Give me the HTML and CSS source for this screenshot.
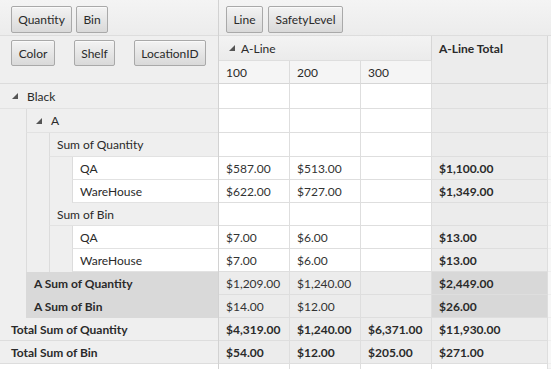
FILE: index.html
```html
<!DOCTYPE html>
<html>
<head>
<meta charset="utf-8">
<link rel="stylesheet" href="styles.css">
</head>
<body>
<div class="pivot">
  <div class="top">
    <div class="lefttop">
      <div class="band">
        <span class="btn w-qty">Quantity</span>
        <span class="btn w-bin">Bin</span>
      </div>
      <div class="rowfields">
        <span class="btn w-color">Color</span>
        <span class="btn w-shelf">Shelf</span>
        <span class="btn w-loc">LocationID</span>
      </div>
    </div>
    <div class="righttop">
      <div class="band band-r">
        <span class="btn w-line">Line</span>
        <span class="btn w-safety">SafetyLevel</span>
      </div>
      <div class="colhead">
        <div class="ch-group"><svg class="tri" viewBox="0 0 6 6"><polygon points="6,0 6,6 0,6"/></svg>A-Line</div>
        <div class="ch-total">A-Line Total</div>
        <div class="ch-col">100</div>
        <div class="ch-col">200</div>
        <div class="ch-col">300</div>
      </div>
    </div>
  </div>

  <div class="body">
    <div class="row h25">
      <div class="rh"><div class="lbl lvl0 gray first"><svg class="tri" viewBox="0 0 6 6"><polygon points="6,0 6,6 0,6"/></svg>Black</div></div>
      <div class="c"></div><div class="c"></div><div class="c"></div><div class="c t"></div><div class="edge"></div>
    </div>
    <div class="row h24">
      <div class="rh"><div class="sp s0"></div><div class="lbl gray l1"><svg class="tri" viewBox="0 0 6 6"><polygon points="6,0 6,6 0,6"/></svg>A</div></div>
      <div class="c"></div><div class="c"></div><div class="c"></div><div class="c t"></div><div class="edge"></div>
    </div>
    <div class="row h24">
      <div class="rh"><div class="sp s0"></div><div class="sp s1"></div><div class="lbl gray l2">Sum of Quantity</div></div>
      <div class="c"></div><div class="c"></div><div class="c"></div><div class="c t"></div><div class="edge"></div>
    </div>
    <div class="row">
      <div class="rh"><div class="sp s0"></div><div class="sp s1"></div><div class="sp s2"></div><div class="lbl white l3">QA</div></div>
      <div class="c">$587.00</div><div class="c">$513.00</div><div class="c"></div><div class="c t b">$1,100.00</div><div class="edge"></div>
    </div>
    <div class="row">
      <div class="rh"><div class="sp s0"></div><div class="sp s1"></div><div class="sp s2"></div><div class="lbl white l3">WareHouse</div></div>
      <div class="c">$622.00</div><div class="c">$727.00</div><div class="c"></div><div class="c t b">$1,349.00</div><div class="edge"></div>
    </div>
    <div class="row">
      <div class="rh"><div class="sp s0"></div><div class="sp s1"></div><div class="lbl gray l2">Sum of Bin</div></div>
      <div class="c"></div><div class="c"></div><div class="c"></div><div class="c t"></div><div class="edge"></div>
    </div>
    <div class="row">
      <div class="rh"><div class="sp s0"></div><div class="sp s1"></div><div class="sp s2"></div><div class="lbl white l3">QA</div></div>
      <div class="c">$7.00</div><div class="c">$6.00</div><div class="c"></div><div class="c t b">$13.00</div><div class="edge"></div>
    </div>
    <div class="row">
      <div class="rh"><div class="sp s0"></div><div class="sp s1"></div><div class="sp s2"></div><div class="lbl white l3">WareHouse</div></div>
      <div class="c">$7.00</div><div class="c">$6.00</div><div class="c"></div><div class="c t b">$13.00</div><div class="edge"></div>
    </div>
    <div class="row sub">
      <div class="rh"><div class="sp s0"></div><div class="lbl dark l1s b">A Sum of Quantity</div></div>
      <div class="c">$1,209.00</div><div class="c">$1,240.00</div><div class="c"></div><div class="c td b">$2,449.00</div><div class="edge"></div>
    </div>
    <div class="row sub">
      <div class="rh"><div class="sp s0"></div><div class="lbl dark l1s b">A Sum of Bin</div></div>
      <div class="c">$14.00</div><div class="c">$12.00</div><div class="c"></div><div class="c td b">$26.00</div><div class="edge"></div>
    </div>
    <div class="row tot">
      <div class="rh"><div class="lbl gray l0t b">Total Sum of Quantity</div></div>
      <div class="c b">$4,319.00</div><div class="c b">$1,240.00</div><div class="c b">$6,371.00</div><div class="c t b">$11,930.00</div><div class="edge"></div>
    </div>
    <div class="row tot">
      <div class="rh"><div class="lbl gray l0t b">Total Sum of Bin</div></div>
      <div class="c b">$54.00</div><div class="c b">$12.00</div><div class="c b">$205.00</div><div class="c t b">$271.00</div><div class="edge"></div>
    </div>
    <div class="row filler">
      <div class="rh"></div>
      <div class="c"></div><div class="c"></div><div class="c"></div><div class="c"></div><div class="edge"></div>
    </div>
  </div>
</div>
</body>
</html>
```

FILE: styles.css
```css
* { box-sizing: border-box; }
html, body { margin: 0; padding: 0; background: #ffffff; }
body {
  font-family: Lato, "Open Sans", sans-serif;
  font-size: 12px;
  color: #2a2a2a;
  width: 551px;
  height: 369px;
  overflow: hidden;
}
.pivot { width: 551px; }

.top { display: flex; height: 84px; }
.lefttop {
  width: 219px;
  border-right: 1px solid #d2d2d2;
  background: #efefef;
  display: flex;
  flex-direction: column;
}
.band {
  height: 36px;
  border-bottom: 1px solid #dddddd;
  background: linear-gradient(#f4f4f4, #ececec);
  display: flex;
  align-items: flex-start;
  padding: 6px 0 0 11px;
  gap: 4px;
}
.band-r { padding-left: 7px; gap: 5px; }
.rowfields {
  flex: 1;
  display: flex;
  align-items: flex-start;
  padding: 4px 0 0 11px;
  background: #efefef;
  border-bottom: 1px solid #dcdcdc;
}
.rowfields .w-shelf { margin-left: 19px; }
.rowfields .w-loc { margin-left: 19px; }

.btn {
  display: flex;
  align-items: center;
  justify-content: center;
  height: 27px;
  border: 1px solid #a9a9a9;
  border-radius: 2px;
  background: linear-gradient(#f3f3f3, #d9d9d9);
  color: #2a2a2a;
  font-size: 12px;
  box-shadow: inset 0 1px 0 #fafafa;
}
.w-qty { width: 61px; }
.w-bin { width: 32px; }
.w-color { width: 44px; height: 26px; }
.w-shelf { width: 41px; height: 26px; }
.w-loc { width: 72px; height: 26px; }
.w-line { width: 37px; }
.w-safety { width: 75px; }

.righttop {
  flex: 1;
  display: flex;
  flex-direction: column;
  background: #f2f2f2;
}
.colhead {
  display: grid;
  grid-template-columns: 71px 71px 71px 116px 1fr;
  grid-template-rows: 25px 23px;
  flex: 1;
}
.ch-group {
  grid-column: 1 / 4;
  grid-row: 1;
  display: flex;
  align-items: center;
  padding-left: 10px;
  background: linear-gradient(#f3f3f3, #ebebeb);
  border-bottom: 1px solid #dedede;
  border-right: 1px solid #d6d6d6;
}
.ch-group .tri { margin-right: 6px; }
.ch-total {
  grid-column: 4;
  grid-row: 1 / 3;
  background: #ececec;
  border-right: 1px solid #d6d6d6;
  border-bottom: 1px solid #d6d6d6;
  font-weight: bold;
  padding: 5px 0 0 7px;
}
.ch-col {
  grid-row: 2;
  display: flex;
  align-items: center;
  padding-left: 7px;
  background: #f5f5f5;
  border-right: 1px solid #dcdcdc;
  border-bottom: 1px solid #d6d6d6;
}

.tri { width: 6px; height: 6px; fill: #555; flex: none; }

.row {
  display: grid;
  grid-template-columns: 219px 71px 71px 71px 116px 1fr;
  height: 23px;
}
.h25 { height: 25px; }
.h24 { height: 24px; }
.filler { height: 5px; }

.rh {
  display: flex;
  border-right: 1px solid #d2d2d2;
  background: #efefef;
}
.sp { flex: none; background: #efefef; }
.s0 { width: 26px; }
.s1 { width: 23px; border-left: 1px solid #dcdcdc; }
.s2 { width: 23px; border-left: 1px solid #dcdcdc; }
.lbl {
  flex: 1;
  display: flex;
  align-items: center;
  white-space: nowrap;
  border-bottom: 1px solid #e2e2e2;
}
.gray { background: #efefef; }
.white { background: #ffffff; border-left: 1px solid #dcdcdc; border-bottom-color: #e2e2e2; }
.dark { background: #d9d9d9; border-bottom-color: #d9d9d9; }
.first { padding-left: 12px; }
.first .tri, .l1 .tri { margin-right: 9px; }
.l1 { padding-left: 9px; border-left: 1px solid #dcdcdc; }
.l2 { padding-left: 7px; border-left: 1px solid #dcdcdc; }
.l3 { padding-left: 7px; }
.l1s { padding-left: 8px; }
.l0t { padding-left: 11px; border-bottom: 1px solid #dddddd; }

.c {
  display: flex;
  align-items: center;
  padding-left: 7px;
  border-right: 1px solid #dedede;
  border-bottom: 1px solid #dedede;
  background: #ffffff;
  color: #333333;
}
.t { background: #ececec; color: #2a2a2a; }
.td { background: #d8d8d8; color: #2a2a2a; }
.sub .c { background: #ececec; }
.sub .c.td { background: #d8d8d8; }
.tot .c { background: #ececec; }
.filler .c { border-bottom: none; background: #fff; }
.filler .rh { background: #fff; }
.b { font-weight: bold; color: #2a2a2a; }
.edge { background: #f7f7f7; border-bottom: 1px solid #eeeeee; }
```
